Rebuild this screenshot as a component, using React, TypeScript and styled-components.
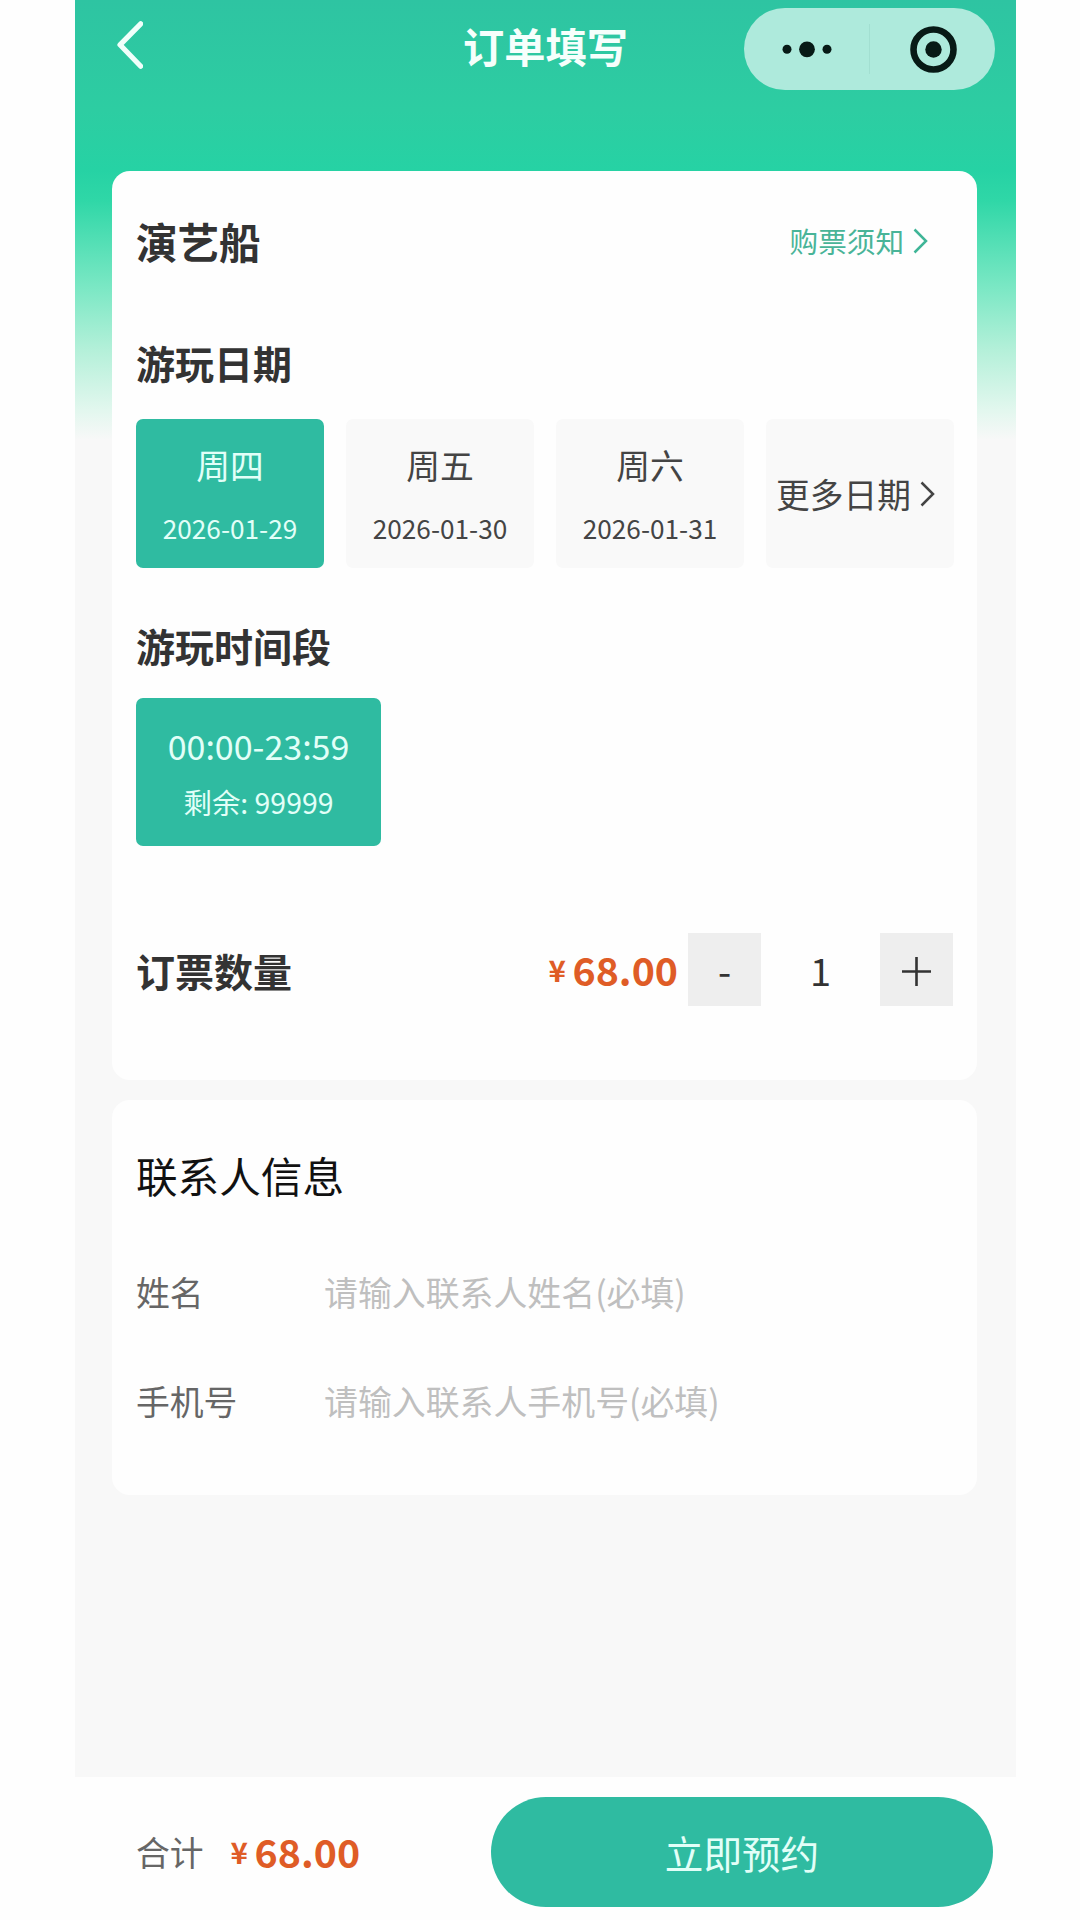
import React, { useState } from "react";
import styled, { createGlobalStyle } from "styled-components";

const GREEN = "#2fbba1";
const ORANGE = "#df5c26";

const GlobalStyle = createGlobalStyle`
  *, *::before, *::after { box-sizing: border-box; }
  html, body { margin: 0; background: #fefefe; }
  body {
    font-family: "Noto Sans CJK SC", "Noto Sans", sans-serif;
    color: #333;
  }
  button {
    font: inherit;
    color: inherit;
    border: 0;
    padding: 0;
    background: none;
  }
  svg { display: block; }
`;

const Phone = styled.div`
  width: 941px;
  height: 1920px;
  margin-left: 75px;
  display: flex;
  flex-direction: column;
  overflow: hidden;
  background: linear-gradient(
      180deg,
      #2ec4a2 0,
      #2dcda2 110px,
      #26d2a4 170px,
      #2fd7a7 200px,
      #7de8c5 290px,
      #b4f0d9 350px,
      #e2f7ee 410px,
      #f8f8f8 440px,
      #f8f8f8 100%
    );
`;

const NavBar = styled.header`
  height: 171px;
  flex: none;
  display: grid;
  grid-template-columns: 1fr auto 1fr;
  align-items: start;
  padding: 8px 21px 0 41px;
`;

const BackButton = styled.button`
  width: 27px;
  height: 48px;
  margin-top: 13px;
`;

const NavTitle = styled.h1`
  margin: 0 20px 0 0;
  font-size: 41.2px;
  line-height: 74px;
  font-weight: 700;
  color: #f6fffc;
`;

const Capsule = styled.div`
  justify-self: end;
  width: 251px;
  height: 82px;
  border-radius: 41px;
  background: #aeeadc;
  display: grid;
  grid-template-columns: 125px 1px 125px;
  align-items: center;
  justify-items: center;
`;

const CapsuleDivider = styled.span`
  width: 1px;
  height: 50px;
  background: #a2dfd1;
`;

const Content = styled.main`
  flex: 1;
  display: flex;
  flex-direction: column;
  gap: 20px;
  padding: 0 39px 0 37px;
`;

const Card = styled.section<{ $height: number }>`
  height: ${(p) => p.$height}px;
  border-radius: 18px;
  background: #fefefe;
  padding: 0 24px;
  display: flex;
  flex-direction: column;
`;

const ProductRow = styled.div`
  height: 140px;
  display: flex;
  align-items: center;
  justify-content: space-between;
  padding-right: 25px;
`;

const ProductName = styled.h2`
  margin: 0;
  font-size: 41.5px;
  line-height: 60px;
  font-weight: 700;
`;

const NoticeLink = styled.button`
  display: flex;
  align-items: center;
  gap: 9px;
  font-size: 28.6px;
  line-height: 42px;
  color: #49b498;
`;

const Heading = styled.h3<{ $top: number; $bottom: number }>`
  margin: ${(p) => p.$top}px 0 ${(p) => p.$bottom}px;
  font-size: 39px;
  line-height: 60px;
  font-weight: 700;
`;

const DateRow = styled.div`
  display: grid;
  grid-template-columns: repeat(4, 188px);
  gap: 22px;
`;

const Tile = styled.button<{ $active?: boolean }>`
  height: 149px;
  border-radius: 7px;
  display: flex;
  flex-direction: column;
  align-items: center;
  justify-content: center;
  background: ${(p) => (p.$active ? GREEN : "#f9f9f9")};
  color: ${(p) => (p.$active ? "#e2fff8" : "#444")};
`;

const Weekday = styled.span`
  font-size: 33.8px;
  line-height: 50px;
`;

const DateText = styled.span`
  font-size: 26.2px;
  line-height: 38px;
  margin-top: 19px;
`;

const MoreDates = styled.span`
  display: flex;
  align-items: center;
  gap: 9px;
  font-size: 33.7px;
  line-height: 50px;
  padding-right: 9px;
`;

const TimeTile = styled(Tile)`
  width: 245px;
  height: 148px;
`;

const TimeText = styled.span`
  font-size: 34px;
  line-height: 50px;
`;

const StockText = styled.span`
  font-size: 28.4px;
  line-height: 42px;
  margin-top: 10px;
`;

const QuantityRow = styled.div`
  margin-top: 87px;
  height: 73px;
  display: flex;
  align-items: center;
  justify-content: space-between;
`;

const QuantityLabel = styled.h3`
  margin: 0;
  font-size: 39px;
  line-height: 60px;
  font-weight: 700;
`;

const QuantityControls = styled.div`
  display: flex;
  align-items: center;
`;

const PriceBox = styled.span`
  display: flex;
  align-items: center;
  color: ${ORANGE};
  font-weight: 700;
  line-height: 60px;
  margin-top: -2px;
`;

const Currency = styled.span`
  width: 24px;
  font-size: 29.5px;
  font-weight: 700;
`;

const Amount = styled.span`
  font-size: 39.3px;
`;

const StepButton = styled.button`
  width: 73px;
  height: 73px;
  background: #eee;
  display: flex;
  align-items: center;
  justify-content: center;
  font-size: 38px;
  line-height: 60px;
`;

const PlusIcon = styled.svg`
  margin-top: 3px;
`;

const Count = styled.span`
  width: 119px;
  text-align: center;
  font-size: 38px;
  line-height: 60px;
`;

const PriceSlot = styled.div`
  margin-right: 10px;
`;

const ContactTitle = styled.h2`
  margin: 43px 0 30px;
  font-size: 41.6px;
  line-height: 64px;
  font-weight: 400;
  color: #111;
`;

const Field = styled.label`
  height: 109px;
  display: grid;
  grid-template-columns: 188px 1fr;
  align-items: center;
  font-size: 33.8px;
  line-height: 50px;
  color: #666;
`;

const Placeholder = styled.span`
  font-size: 33.9px;
  color: #bfbfbf;
`;

const Footer = styled.footer`
  height: 143px;
  flex: none;
  background: #fefefe;
  display: flex;
  align-items: center;
  justify-content: space-between;
  padding: 6px 23px 0 61px;
`;

const Total = styled.div`
  display: flex;
  align-items: center;
  gap: 27px;
  font-size: 33.8px;
  line-height: 50px;
  color: #666;
`;

const SubmitButton = styled.button`
  width: 502px;
  height: 110px;
  border-radius: 55px;
  background: ${GREEN};
  color: #e2fff8;
  font-size: 38.6px;
  line-height: 60px;
`;

function Chevron({ color }: { color: string }) {
  return (
    <svg width="15" height="26" viewBox="0 0 15 26" fill="none">
      <path d="M1.5 1.5 13 13 1.5 24.5" stroke={color} strokeWidth="2.5" />
    </svg>
  );
}

function Price({ value }: { value: number }) {
  return (
    <PriceBox>
      <Currency>¥</Currency>
      <Amount>{value.toFixed(2)}</Amount>
    </PriceBox>
  );
}

const DATES = [
  { day: "周四", date: "2026-01-29" },
  { day: "周五", date: "2026-01-30" },
  { day: "周六", date: "2026-01-31" },
];

const FIELDS = [
  { label: "姓名", hint: "请输入联系人姓名(必填)" },
  { label: "手机号", hint: "请输入联系人手机号(必填)" },
];

const UNIT_PRICE = 68;

export default function App() {
  const [selected, setSelected] = useState(0);
  const [count, setCount] = useState(1);

  return (
    <>
      <GlobalStyle />
      <Phone>
        <NavBar>
          <BackButton>
            <svg width="27" height="48" viewBox="0 0 27 48" fill="none">
              <path
                d="M24.7 2.8 4 23.8 24.7 45.2"
                stroke="#f0fffb"
                strokeWidth="5.2"
                strokeLinecap="round"
                strokeLinejoin="round"
              />
            </svg>
          </BackButton>
          <NavTitle>订单填写</NavTitle>
          <Capsule>
            <svg width="50" height="18" viewBox="0 0 50 18" fill="#071a16">
              <circle cx="5" cy="9.3" r="4.5" />
              <circle cx="25" cy="9.3" r="7.9" />
              <circle cx="45" cy="9.3" r="4.5" />
            </svg>
            <CapsuleDivider />
            <svg width="48" height="48" viewBox="0 0 48 48">
              <circle cx="24.5" cy="24.5" r="20" fill="none" stroke="#071a16" strokeWidth="6.6" />
              <circle cx="24.5" cy="24.5" r="8.2" fill="#071a16" />
            </svg>
          </Capsule>
        </NavBar>

        <Content>
          <Card $height={909}>
            <ProductRow>
              <ProductName>演艺船</ProductName>
              <NoticeLink>
                购票须知
                <Chevron color="#3fb597" />
              </NoticeLink>
            </ProductRow>

            <Heading $top={21} $bottom={27}>游玩日期</Heading>
            <DateRow>
              {DATES.map((d, i) => (
                <Tile key={d.date} $active={i === selected} onClick={() => setSelected(i)}>
                  <Weekday>{d.day}</Weekday>
                  <DateText>{d.date}</DateText>
                </Tile>
              ))}
              <Tile>
                <MoreDates>
                  更多日期
                  <Chevron color="#444" />
                </MoreDates>
              </Tile>
            </DateRow>

            <Heading $top={47} $bottom={23}>游玩时间段</Heading>
            <TimeTile $active>
              <TimeText>00:00-23:59</TimeText>
              <StockText>剩余: 99999</StockText>
            </TimeTile>

            <QuantityRow>
              <QuantityLabel>订票数量</QuantityLabel>
              <QuantityControls>
                <PriceSlot>
                  <Price value={UNIT_PRICE} />
                </PriceSlot>
                <StepButton onClick={() => setCount(Math.max(1, count - 1))}>-</StepButton>
                <Count>{count}</Count>
                <StepButton onClick={() => setCount(count + 1)}>
                  <PlusIcon width="29" height="29" viewBox="0 0 29 29" fill="none">
                    <path d="M0 14.5H29M14.5 0V29" stroke="#333" strokeWidth="2.6" />
                  </PlusIcon>
                </StepButton>
              </QuantityControls>
            </QuantityRow>
          </Card>

          <Card $height={395}>
            <ContactTitle>联系人信息</ContactTitle>
            {FIELDS.map((f) => (
              <Field key={f.label}>
                <span>{f.label}</span>
                <Placeholder>{f.hint}</Placeholder>
              </Field>
            ))}
          </Card>
        </Content>

        <Footer>
          <Total>
            合计
            <Price value={UNIT_PRICE * count} />
          </Total>
          <SubmitButton>立即预约</SubmitButton>
        </Footer>
      </Phone>
    </>
  );
}
